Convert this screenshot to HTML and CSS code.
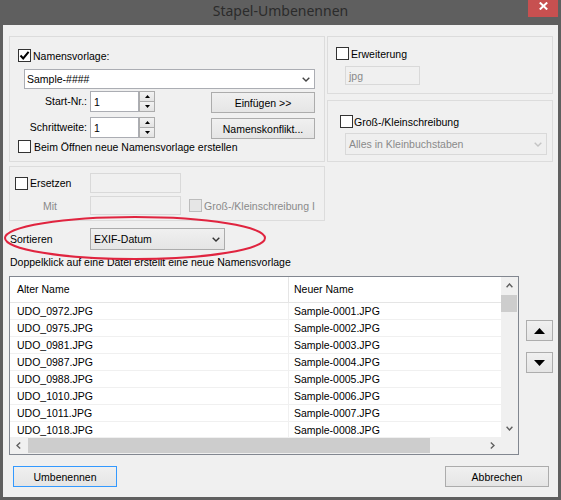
FILE: index.html
```html
<!DOCTYPE html>
<html>
<head>
<meta charset="utf-8">
<link rel="stylesheet" href="styles.css">
</head>
<body>
<div class="window">
  <div class="titlebar">
    <div class="title">Stapel-Umbenennen</div>
    <div class="close"><svg width="9" height="8" viewBox="0 0 9 8"><path d="M0.8 0.5 L8.2 7.5 M8.2 0.5 L0.8 7.5" stroke="#fff" stroke-width="2" fill="none"/></svg></div>
  </div>
  <div class="client">
    <div class="top">
      <div class="group g-name">
        <div class="cbrow n-r1"><span class="cb"><svg width="11" height="11" viewBox="0 0 11 11"><path d="M1.5 5.5 L4.2 8.4 L9.6 1.8" stroke="#000" stroke-width="2" fill="none"/></svg></span><span class="lbl">Namensvorlage:</span></div>
        <div class="combo edit n-r2"><span>Sample-####</span><svg width="8" height="5" viewBox="0 0 8 5"><path d="M0.7 0.7 L4 4 L7.3 0.7" stroke="#444" stroke-width="1.4" fill="none"/></svg></div>
        <div class="numrow n-r3">
          <span class="flabel">Start-Nr.:</span>
          <span class="input num">1</span>
          <span class="spin"><span class="sp up"><svg width="5" height="3" viewBox="0 0 5 3"><path d="M0 3 L2.5 0 L5 3Z" fill="#000"/></svg></span><span class="sp down"><svg width="5" height="3" viewBox="0 0 5 3"><path d="M0 0 L2.5 3 L5 0Z" fill="#000"/></svg></span></span>
          <span class="btn side">Einfügen &gt;&gt;</span>
        </div>
        <div class="numrow n-r4">
          <span class="flabel">Schrittweite:</span>
          <span class="input num">1</span>
          <span class="spin"><span class="sp up"><svg width="5" height="3" viewBox="0 0 5 3"><path d="M0 3 L2.5 0 L5 3Z" fill="#000"/></svg></span><span class="sp down"><svg width="5" height="3" viewBox="0 0 5 3"><path d="M0 0 L2.5 3 L5 0Z" fill="#000"/></svg></span></span>
          <span class="btn side">Namenskonflikt...</span>
        </div>
        <div class="cbrow n-r5"><span class="cb"></span><span class="lbl wide">Beim Öffnen neue Namensvorlage erstellen</span></div>
      </div>
      <div class="rightcol">
        <div class="group g-ext">
          <div class="cbrow e-r1"><span class="cb"></span><span class="lbl">Erweiterung</span></div>
          <div class="input disabled e-r2">jpg</div>
        </div>
        <div class="group g-case">
          <div class="cbrow c-r1"><span class="cb"></span><span class="lbl tight">Groß-/Kleinschreibung</span></div>
          <div class="combo disabled c-r2"><span>Alles in Kleinbuchstaben</span><svg width="8" height="5" viewBox="0 0 8 5"><path d="M0.7 0.7 L4 4 L7.3 0.7" stroke="#c4c4c4" stroke-width="1.4" fill="none"/></svg></div>
        </div>
      </div>
    </div>
    <div class="group g-replace">
      <div class="reprow r-r1">
        <span class="repleft"><span class="cb"></span><span class="lbl">Ersetzen</span></span>
        <span class="input disabled rep"></span>
      </div>
      <div class="reprow r-r2">
        <span class="repleft mit">Mit</span>
        <span class="input disabled rep2"></span>
        <span class="cb dis"></span>
        <span class="lbl grey">Groß-/Kleinschreibung I</span>
      </div>
    </div>
    <div class="sortrow">
      <span class="sortlabel">Sortieren</span>
      <div class="combo list-style"><span>EXIF-Datum</span><svg width="8" height="5" viewBox="0 0 8 5"><path d="M0.7 0.7 L4 4 L7.3 0.7" stroke="#333" stroke-width="1.4" fill="none"/></svg></div>
    </div>
    <div class="hint">Doppelklick auf eine Datei erstellt eine neue Namensvorlage</div>
    <div class="listarea">
      <div class="list">
        <div class="content">
          <div class="lhead"><span class="c1">Alter Name</span><span class="c2">Neuer Name</span></div>
          <div class="lrow"><span class="c1">UDO_0972.JPG</span><span class="c2">Sample-0001.JPG</span></div>
          <div class="lrow"><span class="c1">UDO_0975.JPG</span><span class="c2">Sample-0002.JPG</span></div>
          <div class="lrow"><span class="c1">UDO_0981.JPG</span><span class="c2">Sample-0003.JPG</span></div>
          <div class="lrow"><span class="c1">UDO_0987.JPG</span><span class="c2">Sample-0004.JPG</span></div>
          <div class="lrow"><span class="c1">UDO_0988.JPG</span><span class="c2">Sample-0005.JPG</span></div>
          <div class="lrow"><span class="c1">UDO_1010.JPG</span><span class="c2">Sample-0006.JPG</span></div>
          <div class="lrow"><span class="c1">UDO_1011.JPG</span><span class="c2">Sample-0007.JPG</span></div>
          <div class="lrow"><span class="c1">UDO_1018.JPG</span><span class="c2">Sample-0008.JPG</span></div>
        </div>
        <div class="vscroll">
          <span class="sarrow"><svg width="7" height="5" viewBox="0 0 7 5"><path d="M0.6 4.2 L3.5 1 L6.4 4.2" stroke="#606060" stroke-width="1.4" fill="none"/></svg></span>
          <span class="vthumb"></span>
          <span class="vfill"></span>
          <span class="sarrow"><svg width="7" height="5" viewBox="0 0 7 5"><path d="M0.6 0.8 L3.5 4 L6.4 0.8" stroke="#606060" stroke-width="1.4" fill="none"/></svg></span>
        </div>
        <div class="hscroll">
          <span class="sarrow"><svg width="5" height="7" viewBox="0 0 5 7"><path d="M4.2 0.6 L1 3.5 L4.2 6.4" stroke="#606060" stroke-width="1.4" fill="none"/></svg></span>
          <span class="hthumb"></span>
          <span class="hfill"></span>
          <span class="sarrow"><svg width="5" height="7" viewBox="0 0 5 7"><path d="M0.8 0.6 L4 3.5 L0.8 6.4" stroke="#606060" stroke-width="1.4" fill="none"/></svg></span>
        </div>
        <div class="corner"></div>
      </div>
      <div class="movebtns">
        <span class="mbtn"><svg width="11" height="6" viewBox="0 0 11 6"><path d="M0 6 L5.5 0 L11 6Z" fill="#000"/></svg></span>
        <span class="mbtn"><svg width="11" height="6" viewBox="0 0 11 6"><path d="M0 0 L5.5 6 L11 0Z" fill="#000"/></svg></span>
      </div>
    </div>
    <div class="footer">
      <span class="btn foot default">Umbenennen</span>
      <span class="btn foot">Abbrechen</span>
    </div>
    <svg class="mark" width="555" height="472" viewBox="0 0 555 472"><ellipse cx="132" cy="213" rx="130" ry="21" fill="none" stroke="#e0243f" stroke-width="2"/></svg>
  </div>
</div>
</body>
</html>
```
FILE: styles.css
```css
* { box-sizing: border-box; }
html, body { margin: 0; padding: 0; }
body {
  width: 561px;
  height: 500px;
  overflow: hidden;
  background: #5f5f5f;
  font-family: "Liberation Sans", Arial, sans-serif;
  font-size: 10.5px;
  color: #000;
}
.window {
  width: 561px;
  height: 500px;
  background: #5f5f5f;
  display: flex;
  flex-direction: column;
}
.titlebar {
  height: 25px;
  display: grid;
  grid-template-columns: 1fr auto 1fr;
  align-items: start;
}
.title {
  grid-column: 2;
  font-family: "Noto Sans", sans-serif;
  font-size: 14px;
  line-height: 22px;
  color: #2b2b2b;
}
.close {
  grid-column: 3;
  justify-self: end;
  margin-right: 3px;
  width: 30px;
  height: 17px;
  background: #c75050;
  display: flex;
  justify-content: center;
  padding-top: 2px;
}
.client {
  position: relative;
  margin: 0 3px;
  height: 472px;
  background: #f0f0f0;
  padding: 11px 0 0 6px;
}
.top { display: flex; gap: 2px; }
.group { border: 1px solid #dcdcdc; }
.g-name { width: 316px; height: 126px; }
.rightcol { width: 226px; display: flex; flex-direction: column; gap: 6px; }
.g-ext { height: 58px; }
.g-case { height: 62px; }
.g-replace { width: 316px; height: 55px; margin-top: 4px; }

.cb {
  width: 13px;
  height: 13px;
  flex: none;
  border: 1px solid #333;
  background: #fff;
  display: flex;
  align-items: center;
  justify-content: center;
}
.cb.dis { border-color: #bcbcbc; background: #e6e6e6; margin-left: 8px; }
.lbl { margin-left: 2px; white-space: nowrap; }
.lbl.wide { margin-left: 3px; }
.lbl.tight { margin-left: 1px; }
.lbl.grey { color: #8a8a8a; }

.cbrow { display: flex; align-items: center; height: 13px; }
.n-r1 { margin-top: 12px; padding-left: 8px; }
.n-r5 { margin-top: 2px; padding-left: 8px; }
.e-r1 { margin-top: 10px; padding-left: 8px; }
.c-r1 { margin-top: 14px; padding-left: 12px; }

.combo {
  display: flex;
  align-items: center;
  justify-content: space-between;
  padding: 0 4px 0 2px;
  white-space: nowrap;
}
.combo.edit {
  width: 291px;
  height: 20px;
  background: #fff;
  border: 1px solid #abadb3;
}
.n-r2 { margin-top: 7px; margin-left: 14px; }
.combo.disabled {
  width: 202px;
  height: 22px;
  background: #efefef;
  border: 1px solid #d9d9d9;
  color: #8a8a8a;
  padding-left: 3px;
}
.c-r2 { margin-top: 5px; margin-left: 17px; }
.combo.list-style {
  width: 135px;
  height: 22px;
  border: 1px solid #acacac;
  background: linear-gradient(#f0f0f0, #e5e5e5);
  padding-left: 3px;
}

.numrow { display: flex; align-items: flex-start; height: 21px; }
.n-r3 { margin-top: 2px; }
.n-r4 { margin-top: 5px; }
.flabel { width: 77px; text-align: right; line-height: 21px; margin-right: 3px; }
.input {
  background: #fff;
  border: 1px solid #abadb3;
  display: flex;
  align-items: center;
  padding-left: 3px;
}
.input.num { width: 49px; height: 21px; }
.input.disabled { background: #f0f0f0; border-color: #d9d9d9; color: #8a8a8a; }
.e-r2 { width: 75px; height: 19px; margin-top: 6px; margin-left: 17px; }
.spin { width: 16px; height: 21px; display: flex; flex-direction: column; }
.sp {
  flex: 1;
  border: 1px solid #acacac;
  background: linear-gradient(#f2f2f2, #e4e4e4);
  display: flex;
  align-items: center;
  justify-content: center;
}
.sp.down { border-top: none; }

.btn {
  height: 21px;
  width: 104px;
  border: 1px solid #acacac;
  background: linear-gradient(#f0f0f0, #e5e5e5);
  display: flex;
  align-items: center;
  justify-content: center;
  white-space: nowrap;
}
.btn.side { margin-left: 56px; margin-top: 1px; }
.btn.default { border-color: #3399ff; }

.reprow { display: flex; align-items: center; }
.r-r1 { margin-top: 6px; height: 20px; }
.r-r2 { margin-top: 3px; height: 19px; }
.repleft { width: 80px; display: flex; align-items: center; padding-left: 5px; }
.repleft.mit { padding-left: 33px; color: #8a8a8a; }
.rep { width: 91px; height: 20px; }
.rep2 { width: 91px; height: 19px; }

.sortrow { display: flex; align-items: center; height: 22px; margin-top: 7px; margin-left: 1px; }
.sortlabel { width: 80px; }
.hint { margin-top: 6px; margin-left: 1px; line-height: 13px; height: 13px; white-space: nowrap; }

.listarea { display: flex; margin-top: 7px; }
.list {
  width: 510px;
  height: 179px;
  border: 1px solid #828790;
  background: #fff;
  display: grid;
  grid-template-columns: 491px 17px;
  grid-template-rows: 160px 17px;
}
.content { overflow: hidden; }
.lhead { display: flex; height: 26px; border-bottom: 1px solid #e5e5e5; line-height: 25px; }
.lhead .c1 { width: 279px; border-right: 1px solid #e5e5e5; padding-left: 7px; }
.lhead .c2 { flex: 1; padding-left: 5px; }
.lrow { display: flex; height: 17px; border-bottom: 1px solid #f0f0f0; line-height: 16px; }
.lrow .c1 { width: 279px; border-right: 1px solid #f0f0f0; padding-left: 7px; }
.lrow .c2 { flex: 1; padding-left: 5px; }

.vscroll { background: #f0f0f0; display: flex; flex-direction: column; }
.sarrow { width: 17px; height: 17px; flex: none; display: flex; align-items: center; justify-content: center; }
.vthumb { width: 16px; height: 17px; margin-top: 1px; background: #cdcdcd; }
.vfill { flex: 1; }
.hscroll { background: #f0f0f0; display: flex; }
.hthumb { width: 402px; height: 15px; margin: 1px 0 0 1px; background: #cdcdcd; }
.hfill { flex: 1; }
.corner { background: #f0f0f0; }

.movebtns { margin-left: 7px; margin-top: 44px; display: flex; flex-direction: column; gap: 11px; }
.mbtn {
  width: 27px;
  height: 21px;
  border: 1px solid #adadad;
  background: linear-gradient(#f0f0f0, #e5e5e5);
  display: flex;
  align-items: center;
  justify-content: center;
}

.footer { display: flex; justify-content: space-between; width: 536px; margin-left: 4px; margin-top: 11px; }

.mark { position: absolute; left: 0; top: 0; pointer-events: none; }
```
